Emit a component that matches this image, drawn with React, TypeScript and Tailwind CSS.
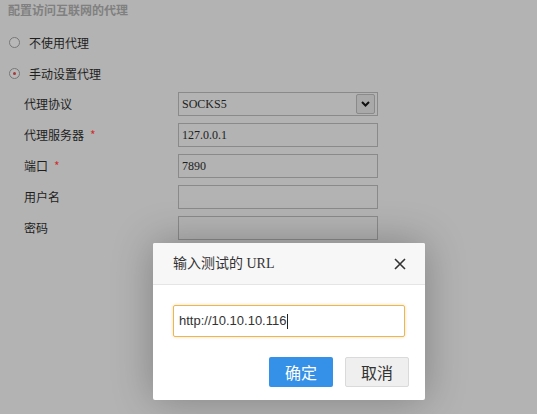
import React from "react";

const Radio = ({ checked }: { checked?: boolean }) => (
  <span className="w-[11px] h-[11px] rounded-full border border-[#777] flex items-center justify-center bg-[#b8b8b8]">
    {checked && <span className="w-[3px] h-[3px] rounded-full bg-[#a33a3a]" />}
  </span>
);

const Row = ({ label, req, children }: { label: string; req?: boolean; children?: React.ReactNode }) => (
  <div className="flex items-center h-[24px]">
    <div className="w-[178px] pl-[24px] text-[12px] text-[#1e1e1e] flex items-center">
      {label}
      {req && <span className="ml-[6px] text-[#d0302e] text-[12px] leading-none">*</span>}
    </div>
    {children}
  </div>
);

const Field = ({ value }: { value?: string }) => (
  <div className="w-[200px] h-[24px] border border-[#8a8a8a] flex items-center pl-[3px] text-[12px] text-[#1e1e1e] font-['Liberation_Serif',serif]">
    {value}
  </div>
);

export default function App() {
  return (
    <div className="relative w-[537px] h-[414px] overflow-hidden bg-[#b3b3b3] font-['Noto_Sans_CJK_SC',sans-serif]">
      <div className="pl-2 pt-[2px] text-[12px] leading-4 font-bold text-[#808080]">配置访问互联网的代理</div>
      <div className="mt-[9px] flex items-center h-[31px] pl-[9px] gap-[9px] text-[12px] text-[#1e1e1e]">
        <Radio />
        <span>不使用代理</span>
      </div>
      <div className="flex items-center h-[31px] pl-[9px] gap-[9px] text-[12px] text-[#1e1e1e]">
        <Radio checked />
        <span>手动设置代理</span>
      </div>
      <div className="mt-[3px] flex flex-col gap-[7px]">
        <Row label="代理协议">
          <div className="w-[200px] h-[24px] border border-[#8a8a8a] flex items-center justify-between pl-[3px] pr-[2px] text-[12px] text-[#1e1e1e] font-['Liberation_Serif',serif]">
            <span>SOCKS5</span>
            <span className="w-[19px] h-[20px] border border-[#8a8a8a] rounded-[2px] bg-[#a9a9a9] flex items-center justify-center">
              <svg width="9" height="6" viewBox="0 0 9 6">
                <path d="M1 1 L4.5 4.5 L8 1" stroke="#111" strokeWidth="2" fill="none" />
              </svg>
            </span>
          </div>
        </Row>
        <Row label="代理服务器" req>
          <Field value="127.0.0.1" />
        </Row>
        <Row label="端口" req>
          <Field value="7890" />
        </Row>
        <Row label="用户名">
          <Field />
        </Row>
        <Row label="密码">
          <Field />
        </Row>
      </div>

      <div className="absolute left-[153px] top-[243px] w-[272px] h-[157px] bg-white rounded-[2px] shadow-[0_0_40px_rgba(0,0,0,0.28)] flex flex-col">
        <div className="h-[42px] bg-[#f7f7f7] border-b border-[#e5e5e5] flex items-center justify-between pl-[20px] pr-[19px] rounded-t-[2px]">
          <span className="text-[14px] text-[#333] font-['Liberation_Serif','Noto_Sans_CJK_SC',serif]">输入测试的 URL</span>
          <svg width="12" height="12" viewBox="0 0 12 12">
            <path d="M1 1 L11 11 M11 1 L1 11" stroke="#333" strokeWidth="1.6" />
          </svg>
        </div>
        <div className="px-[20px] pt-[20px]">
          <div className="h-[32px] border-[1.5px] border-[#ecb654] rounded-[2px] shadow-[0_0_3px_rgba(236,182,84,0.5)] flex items-center pl-[5px] text-[13px] text-[#333] font-['Liberation_Sans',sans-serif]">
            http://10.10.10.116<span className="w-px h-[15px] bg-[#222] ml-[1px]" />
          </div>
        </div>
        <div className="flex justify-end gap-[12px] pr-[16px] mt-[20px]">
          <button className="w-[64px] h-[30px] bg-[#3591e7] rounded-[2px] text-white text-[16px]">确定</button>
          <button className="w-[64px] h-[30px] bg-[#efefef] border border-[#dadada] rounded-[2px] text-[#333] text-[16px]">取消</button>
        </div>
      </div>
    </div>
  );
}
